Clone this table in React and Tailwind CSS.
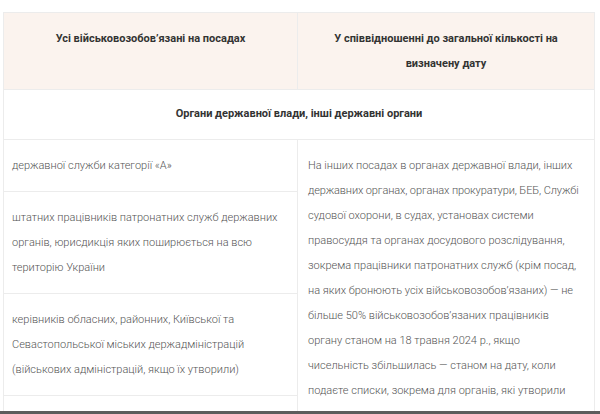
const rows = [
  'державної служби категорії «А»',
  'штатних працівників патронатних служб державних органів, юрисдикція яких поширюється на всю територію України',
  'керівників обласних, районних, Київської та Севастопольської міських держадміністрацій (військових адміністрацій, якщо їх утворили)',
  'державної служби категорії «Б», але на яких поширюється дія закону',
]

const App = () => {
  return (
    <div className="relative h-[414px] overflow-hidden bg-white font-['Roboto',sans-serif] text-[11px] leading-[25px]">
      <div className="pl-[3px] pr-[5px] pt-[12px]">
        <table className="w-full table-fixed border-collapse">
          <thead>
            <tr className="bg-[#fbf3ee]">
              <th className="w-[294px] border border-[#ececec] px-[10px] py-[13px] align-top font-bold text-[#333]">
                Усі військовозобов’язані на посадах
              </th>
              <th className="border border-[#ececec] px-[10px] py-[13px] align-top font-bold text-[#333]">
                У співвідношенні до загальної кількості на визначену дату
              </th>
            </tr>
          </thead>
          <tbody>
            <tr>
              <td colSpan={2} className="border border-[#ececec] px-[10px] pt-[11px] pb-[13px] text-center font-bold text-[#333]">
                Органи державної влади, інші державні органи
              </td>
            </tr>
            {rows.map((text, i) => (
              <tr key={i}>
                <td className="border border-[#ececec] pl-[8px] pr-[6px] py-[13px] align-top font-light text-[#555]">{text}</td>
                {i === 0 && (
                  <td rowSpan={rows.length} className="border border-[#ececec] pl-[10px] pr-[11px] py-[13px] align-top font-light text-[#555]">
                    На інших посадах в органах державної влади, інших{' '}
                    <span className="tracking-[-0.01em]">державних органах, органах прокуратури, БЕБ, Службі</span>{' '}
                    судової охорони, в судах, установах системи правосуддя та органах досудового розслідування, зокрема
                    працівники патронатних служб (крім посад, на яких бронюють усіх військовозобов’язаних) — не більше 50%
                    військовозобов’язаних працівників органу станом на 18 травня 2024 р., якщо чисельність збільшилась —
                    станом на дату, коли подаєте списки, зокрема для органів, які утворили після 18 травня 2024 року
                  </td>
                )}
              </tr>
            ))}
          </tbody>
        </table>
      </div>
      <div className="absolute inset-x-0 bottom-0 h-[3px] bg-[#5c5c5c]" />
    </div>
  )
}

export default App
